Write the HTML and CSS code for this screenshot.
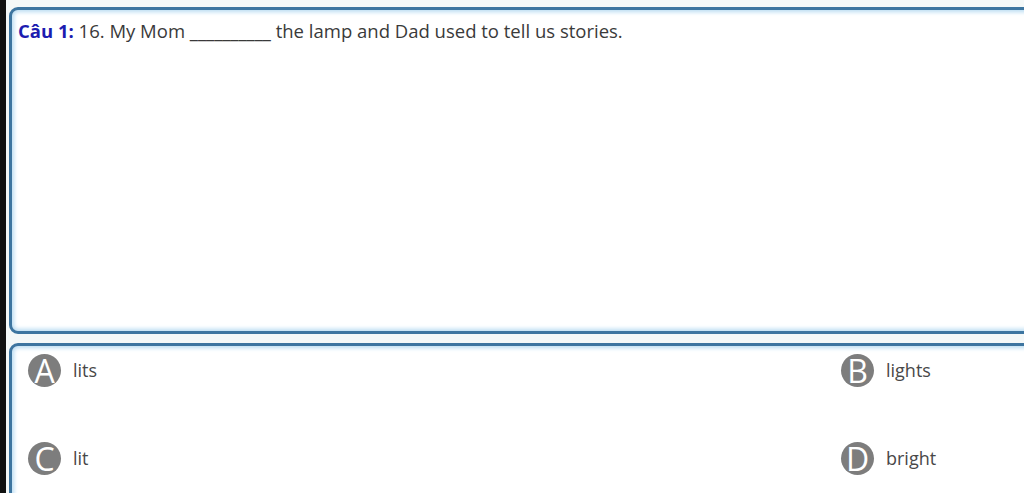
FILE: index.html
```html
<!DOCTYPE html>
<html lang="vi">
<head>
    <meta charset="UTF-8">
    <meta name="viewport" content="width=device-width, initial-scale=1.0">
    <title>Câu 1</title>
    <link rel="stylesheet" href="styles.css">
</head>
<body>

    <!-- viền trái -->
    <div class="left-strip"></div>

    <div class="quiz">
        <!-- câu hỏi -->
        <div class="question-box">
            <p class="question"><span class="q-label">Câu 1:</span> 16. My Mom <span class="blank">__________</span> the lamp and Dad used to tell us stories.</p>
        </div>

        <!-- đáp án -->
        <div class="answer-box">
            <div class="option"><span class="badge">A</span><span class="opt-text">lits</span></div>
            <div class="option"><span class="badge">B</span><span class="opt-text">lights</span></div>
            <div class="option"><span class="badge">C</span><span class="opt-text">lit</span></div>
            <div class="option"><span class="badge">D</span><span class="opt-text">bright</span></div>
        </div>
    </div>

</body>
</html>
```

FILE: styles.css
```css
* {
    margin: 0;
    padding: 0;
    box-sizing: border-box;
}

body {
    font-family: "Open Sans", "Noto Sans", sans-serif;
    background-color: #f4f8f8;
    display: flex;
    height: 100vh;
    overflow: hidden;
}

.left-strip {
    width: 6px;
    background-color: #111;
    flex-shrink: 0;
}

.quiz {
    flex: 1;
    min-height: 0;
    padding: 7px 0 0 3px;
    margin-right: -20px;
    margin-bottom: -20px;
    display: flex;
    flex-direction: column;
    gap: 9px;
}

/* khung câu hỏi */
.question-box,
.answer-box {
    background-color: white;
    border: 3px solid #3d75a0;
    border-radius: 9px;
    box-shadow: inset 0 0 4px 2px #b9dcf2;
}

.question-box {
    height: 327px;
    flex-shrink: 0;
    padding: 8px 6px;
}

.question {
    font-size: 18.5px;
    color: #3a3a3a;
}

.q-label {
    color: #1c1cb0;
    font-weight: bold;
}

/* khung đáp án */
.answer-box {
    flex: 1;
    min-height: 0;
    overflow: hidden;
    display: grid;
    grid-template-columns: 813px 1fr;
    grid-template-rows: 88px 33px;
    padding: 8px 16px 0;
}

.option {
    display: flex;
    align-items: flex-start;
    gap: 12px;
}

.badge {
    width: 33px;
    height: 33px;
    border-radius: 50%;
    background-color: #7d7d7d;
    color: white;
    font-size: 32px;
    line-height: 33px;
    text-align: center;
}

.opt-text {
    font-size: 18px;
    color: #484848;
    line-height: 33px;
}
```
